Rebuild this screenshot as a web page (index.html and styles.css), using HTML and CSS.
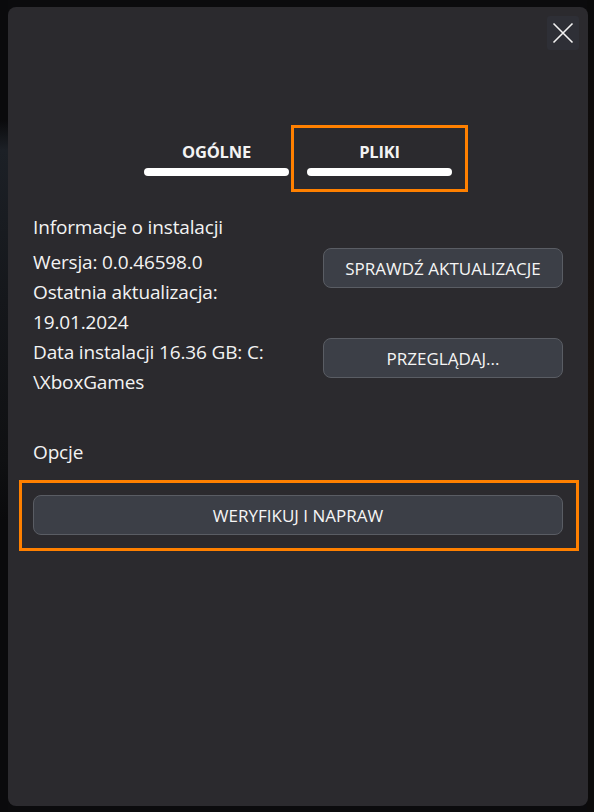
FILE: index.html
```html
<!DOCTYPE html>
<html lang="pl">
<head>
<meta charset="utf-8">
<title>Zarządzaj</title>
<link rel="stylesheet" href="styles.css">
</head>
<body>
<div class="backdrop">
  <div class="dialog">
    <button class="close" aria-label="Zamknij">
      <svg width="22" height="22" viewBox="0 0 22 22"><path d="M1.5 1.5 L20.5 20.5 M20.5 1.5 L1.5 20.5" stroke="#f2f2f2" stroke-width="1.6" fill="none"/></svg>
    </button>
    <nav class="tabs">
      <div class="tab"><span class="tab-label">OGÓLNE</span><span class="tab-bar"></span></div>
      <div class="tab tab-active"><span class="tab-label">PLIKI</span><span class="tab-bar"></span></div>
    </nav>
    <section class="info">
      <div class="info-text">
        <p class="info-title">Informacje o instalacji</p>
        <p class="line">Wersja: 0.0.46598.0</p>
        <p class="line">Ostatnia aktualizacja:</p>
        <p class="line">19.01.2024</p>
        <p class="line">Data instalacji 16.36 GB: C:</p>
        <p class="line">\XboxGames</p>
      </div>
      <div class="info-actions">
        <button class="btn">SPRAWDŹ AKTUALIZACJE</button>
        <button class="btn">PRZEGLĄDAJ...</button>
      </div>
    </section>
    <section class="options">
      <p class="options-title">Opcje</p>
      <div class="highlight">
        <button class="btn btn-wide">WERYFIKUJ I NAPRAW</button>
      </div>
    </section>
  </div>
</div>
</body>
</html>
```
FILE: styles.css
```css
* { box-sizing: border-box; }
html, body { margin: 0; padding: 0; }
body {
  width: 594px;
  height: 812px;
  overflow: hidden;
  background: #0b0b0d;
  font-family: "Open Sans", "Noto Sans", sans-serif;
  color: #f3f3f3;
}
.backdrop {
  width: 594px;
  height: 812px;
  padding: 7px 6px 6px 8px;
  background:
    linear-gradient(180deg, #0a0a0c 0, #0a0a0c 120px, #1c2026 150px, #15171b 300px, #0f1012 460px, #0a0a0c 520px) left / 8px 100% no-repeat,
    linear-gradient(180deg, #0a0a0b 0, #120d0b 200px, #17100c 380px, #0c0b0b 600px) right / 7px 100% no-repeat,
    #0b0b0d;
}
.dialog {
  position: relative;
  width: 580px;
  height: 799px;
  background: #2b2a2e;
  border-radius: 8px;
  padding: 0 25px;
}
.close {
  position: absolute;
  top: 9px;
  right: 9px;
  width: 32px;
  height: 34px;
  border: 0;
  border-radius: 3px;
  background: #2e2f36;
  display: flex;
  align-items: center;
  justify-content: center;
  padding: 0;
}
.tabs {
  display: flex;
  justify-content: center;
  gap: 18px;
  padding-top: 134px;
}
.tab {
  width: 145px;
  display: flex;
  flex-direction: column;
  align-items: center;
}
.tab-label {
  font-weight: 700;
  font-size: 16.5px;
  line-height: 22px;
  letter-spacing: -0.2px;
}
.tab-bar {
  margin-top: 5px;
  width: 145px;
  height: 8px;
  border-radius: 4px;
  background: #ffffff;
}
.tab-active {
  outline: 3px solid #ff8000;
  outline-offset: 13px;
}
.info {
  display: flex;
  justify-content: space-between;
  margin-top: 36px;
}
.info-text p {
  margin: 0;
  font-size: 19px;
  line-height: 30px;
  letter-spacing: -0.15px;
}
.info-text .info-title {
  margin-bottom: 5px;
}
.info-actions {
  display: flex;
  flex-direction: column;
  gap: 50px;
  padding-top: 36px;
}
.btn {
  width: 240px;
  height: 40px;
  border-radius: 8px;
  border: 1px solid #5a5d64;
  background: #3c3f47;
  color: #f5f5f5;
  font-family: "Open Sans", "Noto Sans", sans-serif;
  font-size: 17px;
  letter-spacing: 0;
  padding: 0;
}
.options {
  margin-top: 40px;
}
.options-title {
  margin: 0 0 13px 0;
  font-size: 19px;
  line-height: 30px;
  letter-spacing: -0.15px;
}
.highlight {
  margin-left: -14px;
  width: 560px;
  border: 3px solid #ff8000;
  padding: 12px 13px 13px 11px;
}
.btn-wide {
  width: 530px;
  display: block;
}
```
